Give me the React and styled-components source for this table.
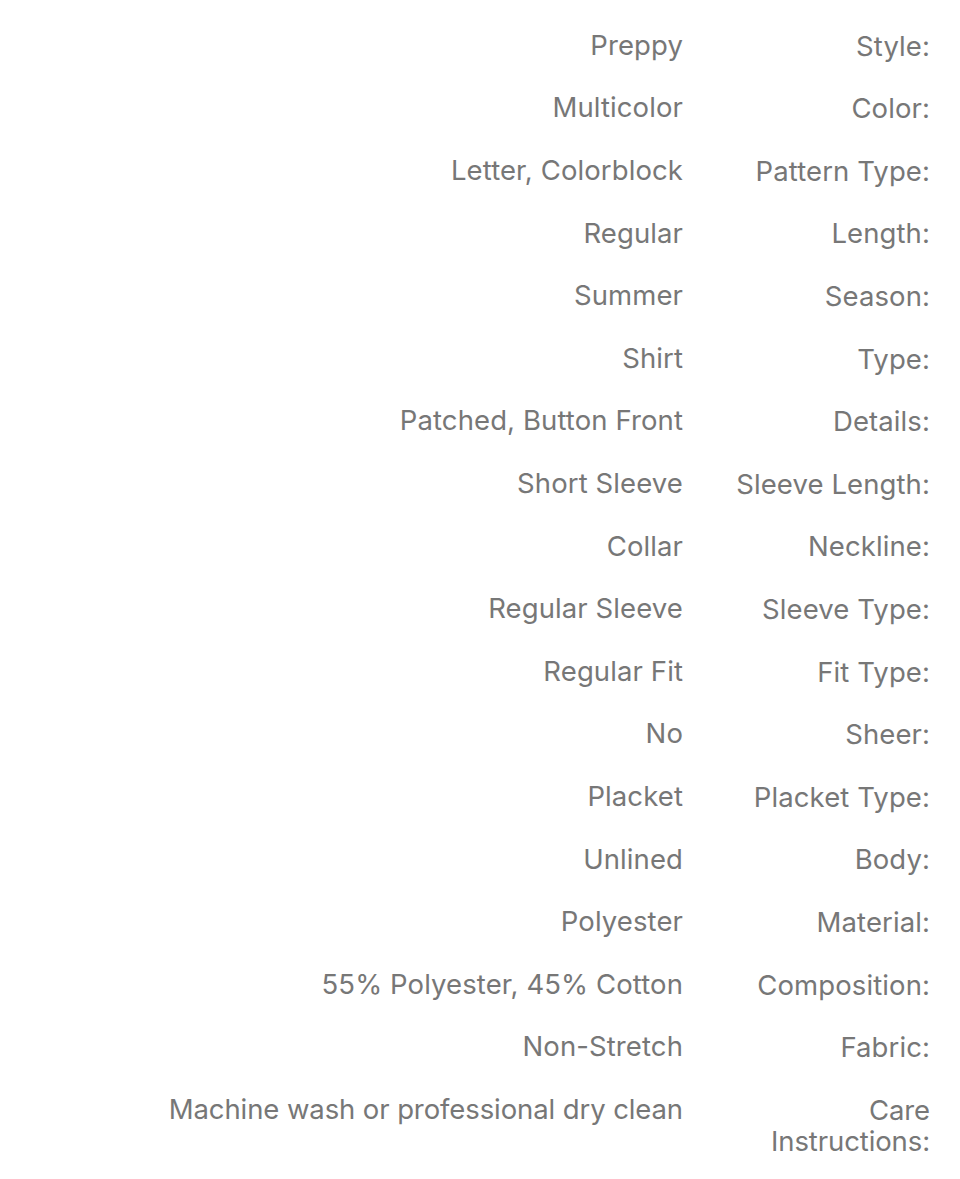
import React from "react";
import styled, { createGlobalStyle } from "styled-components";

const GlobalStyle = createGlobalStyle`
  html, body {
    margin: 0;
    padding: 0;
    background: #fff;
  }
`;

const Table = styled.div`
  width: 960px;
  box-sizing: border-box;
  padding: 14px 30px 0 0;
  display: grid;
  grid-template-columns: 1fr 195px;
  column-gap: 52px;
  font-family: Inter, "Noto Sans", sans-serif;
  font-size: 27.5px;
  letter-spacing: 0.1px;
  line-height: 31px;
  color: #777;
`;

const Cell = styled.div`
  padding: 15.8px 0;
  text-align: right;
  white-space: ${(p) => (p.$wrap ? "normal" : "nowrap")};
  letter-spacing: ${(p) => (p.$tight ? "-0.1px" : "inherit")};
`;

const Label = styled(Cell)`
  padding-top: 16.6px;
  padding-bottom: 15px;
`;

const specs = [
  ["Preppy", "Style:"],
  ["Multicolor", "Color:"],
  ["Letter, Colorblock", "Pattern Type:"],
  ["Regular", "Length:"],
  ["Summer", "Season:"],
  ["Shirt", "Type:"],
  ["Patched, Button Front", "Details:"],
  ["Short Sleeve", "Sleeve Length:"],
  ["Collar", "Neckline:"],
  ["Regular Sleeve", "Sleeve Type:"],
  ["Regular Fit", "Fit Type:"],
  ["No", "Sheer:"],
  ["Placket", "Placket Type:"],
  ["Unlined", "Body:"],
  ["Polyester", "Material:"],
  ["55% Polyester, 45% Cotton", "Composition:"],
  ["Non-Stretch", "Fabric:"],
  ["Machine wash or professional dry clean", "Care Instructions:"],
];

const App = () => {
  return (
    <>
      <GlobalStyle />
      <Table>
        {specs.map(([value, label]) => (
          <React.Fragment key={label}>
            <Cell $tight={value.length > 30}>{value}</Cell>
            <Label $wrap $tight={label.length > 15}>{label}</Label>
          </React.Fragment>
        ))}
      </Table>
    </>
  );
};

export default App;
